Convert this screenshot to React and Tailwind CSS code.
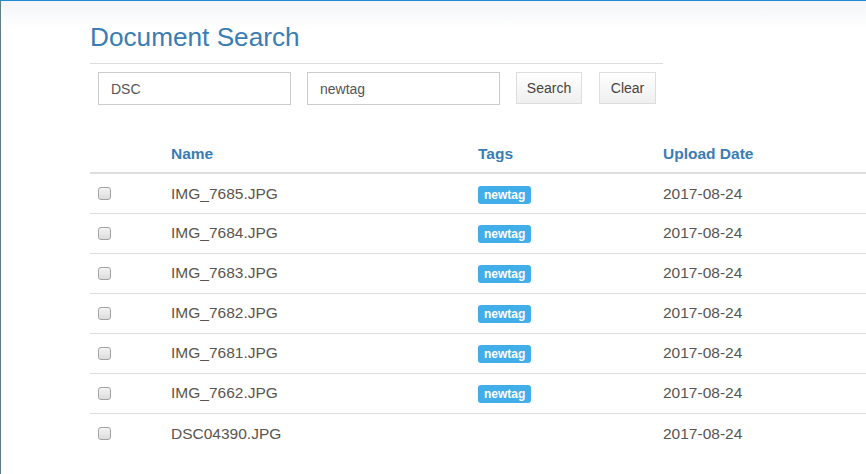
import React, { useState } from 'react'

const rows = [
  { name: 'IMG_7685.JPG', tag: 'newtag', date: '2017-08-24' },
  { name: 'IMG_7684.JPG', tag: 'newtag', date: '2017-08-24' },
  { name: 'IMG_7683.JPG', tag: 'newtag', date: '2017-08-24' },
  { name: 'IMG_7682.JPG', tag: 'newtag', date: '2017-08-24' },
  { name: 'IMG_7681.JPG', tag: 'newtag', date: '2017-08-24' },
  { name: 'IMG_7662.JPG', tag: 'newtag', date: '2017-08-24' },
  { name: 'DSC04390.JPG', tag: null, date: '2017-08-24' }
]

function Checkbox() {
  return (
    <div className="w-[13px] h-[13px] rounded-[3px] border border-[#a3a3a3] bg-[linear-gradient(#f4f4f4,#dcdcdc)]" />
  )
}

export default function App() {
  const [name, setName] = useState('DSC')
  const [tag, setTag] = useState('newtag')

  return (
    <div
      className="w-[866px] h-[474px] overflow-hidden border-t border-l border-t-[#1e8ad6] border-l-[#5f7f86] bg-[linear-gradient(#f3f5f7,#ffffff_28px)]"
      style={{ fontFamily: '"Liberation Sans", Arial, sans-serif' }}
    >
      <div className="pl-[89px] pt-[21px]">
        <h1 className="text-[26.2px] leading-[30px] text-[#3a7db5]">Document Search</h1>
        <div className="w-[573px] mt-[11px] border-t border-[#dddddd]" />

        <div className="flex items-start mt-[8px] pl-[8px]">
          <input
            value={name}
            onChange={(e) => setName(e.target.value)}
            className="w-[193px] h-[33px] px-[12px] border border-[#cccccc] text-[14px] text-[#555] outline-none bg-white"
          />
          <input
            value={tag}
            onChange={(e) => setTag(e.target.value)}
            className="ml-[16px] w-[193px] h-[33px] px-[12px] border border-[#cccccc] text-[14px] text-[#555] outline-none bg-white"
          />
          <button className="ml-[16px] w-[66px] h-[32px] border border-[#dddddd] bg-[linear-gradient(#ffffff,#efefef)] text-[14px] text-[#444]">
            Search
          </button>
          <button className="ml-[17px] w-[57px] h-[32px] border border-[#dddddd] bg-[linear-gradient(#ffffff,#efefef)] text-[14px] text-[#444]">
            Clear
          </button>
        </div>

        <table className="mt-[30px] w-[900px] border-collapse text-[15.5px]">
          <thead>
            <tr className="border-b-2 border-[#dddddd]">
              <th className="w-[73px] h-[38px]" />
              <th className="w-[307px] px-[8px] text-left font-bold text-[#3a7db5]">Name</th>
              <th className="w-[185px] px-[8px] text-left font-bold text-[#3a7db5]">Tags</th>
              <th className="px-[8px] text-left font-bold text-[#3a7db5]">Upload Date</th>
            </tr>
          </thead>
          <tbody>
            {rows.map((r, i) => (
              <tr key={i} className={i < rows.length - 1 ? 'border-b border-[#dddddd]' : ''}>
                <td className="h-[40px] pl-[8px]">
                  <Checkbox />
                </td>
                <td className="px-[8px] text-[#5a5550]">{r.name}</td>
                <td className="px-[8px]">
                  {r.tag && (
                    <span className="inline-block px-[6px] h-[18px] leading-[18px] rounded-[3px] bg-[#41aee9] text-white text-[12px] font-bold">
                      {r.tag}
                    </span>
                  )}
                </td>
                <td className="px-[8px] text-[#555]">{r.date}</td>
              </tr>
            ))}
          </tbody>
        </table>
      </div>
    </div>
  )
}
